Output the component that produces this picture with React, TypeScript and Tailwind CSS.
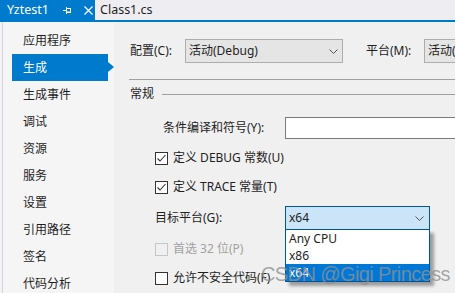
import React from 'react';

const font = { fontFamily: '"Noto Sans", "Noto Sans CJK SC", sans-serif' };

const navItems = ['应用程序', '生成', '生成事件', '调试', '资源', '服务', '设置', '引用路径', '签名', '代码分析'];

const Chevron = () => (
  <svg width="9" height="5" viewBox="0 0 9 5" className="shrink-0">
    <polyline points="0.5,0.5 4.5,4.5 8.5,0.5" fill="none" stroke="#555" strokeWidth="1" />
  </svg>
);

const CheckBox = ({ checked, disabled }: { checked?: boolean; disabled?: boolean }) => (
  <div
    className={`w-[13px] h-[13px] border shrink-0 flex items-center justify-center ${
      disabled ? 'border-[#c6c6c6] bg-[#f0f0f0]' : 'border-[#333] bg-white'
    }`}
  >
    {checked && (
      <svg width="11" height="11" viewBox="0 0 11 11">
        <polyline points="1.5,5.5 4,8 9.5,2" fill="none" stroke="#333" strokeWidth="1.1" />
      </svg>
    )}
  </div>
);

const CheckRow = ({ label, checked, disabled, className }: { label: string; checked?: boolean; disabled?: boolean; className: string }) => (
  <div className={`flex items-center h-[16px] ml-[41px] gap-[5px] ${className}`}>
    <CheckBox checked={checked} disabled={disabled} />
    <span className={`text-[12px] whitespace-nowrap ${disabled ? 'text-[#a2a2a2]' : 'text-[#1e1e1e]'}`}>{label}</span>
  </div>
);

export default function App() {
  return (
    <div className="w-[455px] h-[293px] overflow-hidden bg-[#f0f0f0] flex flex-col relative" style={font}>
      {/* tab strip */}
      <div className="h-[20px] bg-[#eeeef2] flex items-stretch shrink-0">
        <div className="w-[95px] bg-[#007acc] flex items-center pl-[7px] text-white text-[12.5px]">
          <span>Yztest1</span>
          <svg width="8" height="8" viewBox="0 0 8 8" className="ml-[14px]">
            <line x1="0" y1="4.5" x2="3" y2="4.5" stroke="white" strokeWidth="1" />
            <line x1="3.5" y1="1" x2="3.5" y2="8" stroke="white" strokeWidth="1" />
            <rect x="3.5" y="2.5" width="4" height="4" fill="none" stroke="white" strokeWidth="1" />
            <line x1="3.5" y1="6" x2="8" y2="6" stroke="white" strokeWidth="1" />
          </svg>
          <svg width="9" height="9" viewBox="0 0 9 9" className="ml-[13px]">
            <path d="M0.5 0.5 L8.5 8.5 M8.5 0.5 L0.5 8.5" stroke="white" strokeWidth="1.3" />
          </svg>
        </div>
        <div className="flex items-center pl-[5px] text-[12.5px] text-[#1e1e1e]">Class1.cs</div>
      </div>
      <div className="h-[2px] bg-[#007acc] shrink-0" />

      <div className="flex flex-1 min-h-0">
        {/* sidebar */}
        <div className="w-[2px] bg-[#f3f3f6] shrink-0" />
        <div className="w-px bg-[#d3d3e3] shrink-0" />
        <div className="w-[111px] bg-[#f5f5f5] shrink-0 pt-[5px] flex flex-col">
          {navItems.map((item) => {
            const active = item === '生成';
            return (
              <div key={item} className="h-[27px] shrink-0 flex items-center relative">
                {active && (
                  <>
                    <div className="absolute left-[9px] top-0 w-[96px] h-[27px] bg-[#007acc]" />
                    <div className="absolute left-[105px] top-[8px] w-0 h-0 border-y-[5px] border-y-transparent border-l-[6px] border-l-[#007acc]" />
                  </>
                )}
                <span className={`relative pl-[20px] text-[12px] ${active ? 'text-white' : 'text-[#1e1e1e]'}`}>{item}</span>
              </div>
            );
          })}
        </div>

        {/* content */}
        <div className="flex-1 min-w-0 flex flex-col text-[12px] text-[#1e1e1e]">
          <div className="flex items-center h-[24px] mt-[17px] whitespace-nowrap">
            <span className="ml-[16px] w-[55px] shrink-0">配置(C):</span>
            <div className="w-[158px] h-[24px] shrink-0 bg-[#e5e5e5] border border-[#adadad] flex items-center justify-between pl-[3px] pr-[4px]">
              <span>活动(Debug)</span>
              <Chevron />
            </div>
            <span className="ml-[23px] w-[58px] shrink-0">平台(M):</span>
            <div className="w-[100px] h-[24px] shrink-0 bg-[#e5e5e5] border border-[#adadad] flex items-center pl-[3px]">
              <span>活动(Debug)</span>
            </div>
          </div>

          <div className="mt-[16px] ml-[15px] h-px bg-[#a0a0a0]" />

          <div className="mt-[6px] h-[16px] flex items-center">
            <span className="ml-[16px]">常规</span>
            <div className="flex-1 h-px bg-[#a0a0a0] ml-[8px]" />
          </div>

          <div className="mt-[15px] h-[22px] flex items-center whitespace-nowrap">
            <span className="ml-[49px] w-[122px] shrink-0">条件编译和符号(Y):</span>
            <div className="flex-1 h-[22px] bg-white border border-[#7a7a7a] border-r-0" />
          </div>

          <CheckRow className="mt-[11px]" label="定义 DEBUG 常数(U)" checked />
          <CheckRow className="mt-[13px]" label="定义 TRACE 常量(T)" checked />

          <div className="mt-[11px] h-[24px] flex items-center whitespace-nowrap relative z-10">
            <span className="ml-[41px] w-[130px] shrink-0">目标平台(G):</span>
            <div className="relative w-[145px] h-[24px] shrink-0">
              <div className="h-full bg-[#cce4f7] border border-[#005499] flex items-center justify-between pl-[3px] pr-[5px]">
                <span>x64</span>
                <Chevron />
              </div>
              <div className="absolute left-0 top-[23px] w-[145px] bg-white border border-[#005499] flex flex-col shadow-[4px_4px_3px_rgba(0,0,0,0.35)]">
                <div className="h-[17px] flex items-center pl-[3px]">Any CPU</div>
                <div className="h-[17px] flex items-center pl-[3px]">x86</div>
                <div className="h-[17px] flex items-center pl-[3px] bg-[#0078d7] text-white">x64</div>
              </div>
            </div>
          </div>

          <CheckRow className="mt-[11px]" label="首选 32 位(P)" disabled />
          <CheckRow className="mt-[13px]" label="允许不安全代码(F)" />
        </div>
      </div>

      {/* watermark */}
      <div
        className="absolute left-[261px] top-[259px] z-20 text-[20px] tracking-[-0.6px] text-[#909090]/80 whitespace-nowrap pointer-events-none"
        style={{ fontFamily: '"Liberation Sans", sans-serif' }}
      >
        CSDN @Gigi Princess
      </div>
    </div>
  );
}
